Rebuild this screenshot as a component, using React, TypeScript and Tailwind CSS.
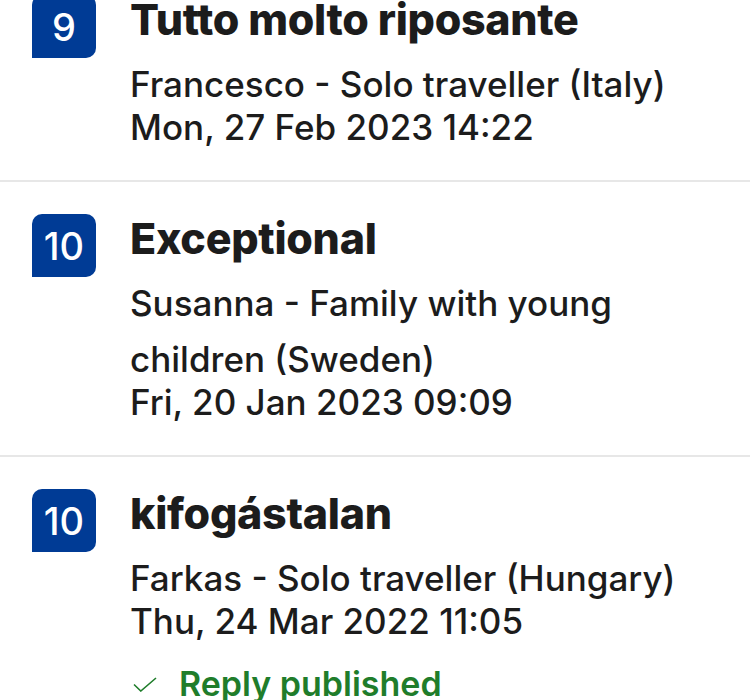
import React from "react";

interface Review {
  score: number;
  title: string;
  guest: string;
  date: string;
  replied?: boolean;
}

const reviews: Review[] = [
  {
    score: 9,
    title: "Tutto molto riposante",
    guest: "Francesco - Solo traveller (Italy)",
    date: "Mon, 27 Feb 2023 14:22",
  },
  {
    score: 10,
    title: "Exceptional",
    guest: "Susanna - Family with young children (Sweden)",
    date: "Fri, 20 Jan 2023 09:09",
  },
  {
    score: 10,
    title: "kifogástalan",
    guest: "Farkas - Solo traveller (Hungary)",
    date: "Thu, 24 Mar 2022 11:05",
    replied: true,
  },
];

function ReviewRow({ review, first }: { review: Review; first: boolean }) {
  return (
    <div className={`flex gap-[34px] pl-8 pr-4 pb-[38px] ${first ? "pt-0" : "pt-8"}`}>
      <div className="w-16 h-[63px] shrink-0 bg-[#003b95] rounded-[10px] rounded-bl-none flex items-center justify-center">
        <span className="text-white text-[38px] font-medium leading-none">{review.score}</span>
      </div>
      <div className="flex-1 min-w-0 text-[#1c1c1c]">
        <h3 className="text-[43px] leading-[48px] font-extrabold tracking-[-0.3px]">{review.title}</h3>
        <p className="mt-[13px] text-[35px] leading-[56px] font-medium">{review.guest}</p>
        <p className="text-[35px] leading-[30px] font-medium">{review.date}</p>
        {review.replied && (
          <div className="mt-[28px] flex items-center gap-[22px] text-[#1f7d2b]">
            <svg width="24" height="15" viewBox="0 0 24 15" fill="none" className="ml-[3px]">
              <path d="M1 7.5 L7.8 14 L23 1" stroke="#1f7d2b" strokeWidth="1.6" />
            </svg>
            <span className="text-[34px] leading-[40px] font-semibold">Reply published</span>
          </div>
        )}
      </div>
    </div>
  );
}

export default function App() {
  return (
    <div
      className="w-[750px] h-[700px] overflow-hidden bg-white"
      style={{ fontFamily: "Inter, 'Noto Sans', sans-serif" }}
    >
      <div className="-mt-[5px]">
        {reviews.map((r, i) => (
          <div key={i}>
            {i > 0 && <div className="h-[2px] bg-[#e7e7e7]" />}
            <ReviewRow review={r} first={i === 0} />
          </div>
        ))}
      </div>
    </div>
  );
}
